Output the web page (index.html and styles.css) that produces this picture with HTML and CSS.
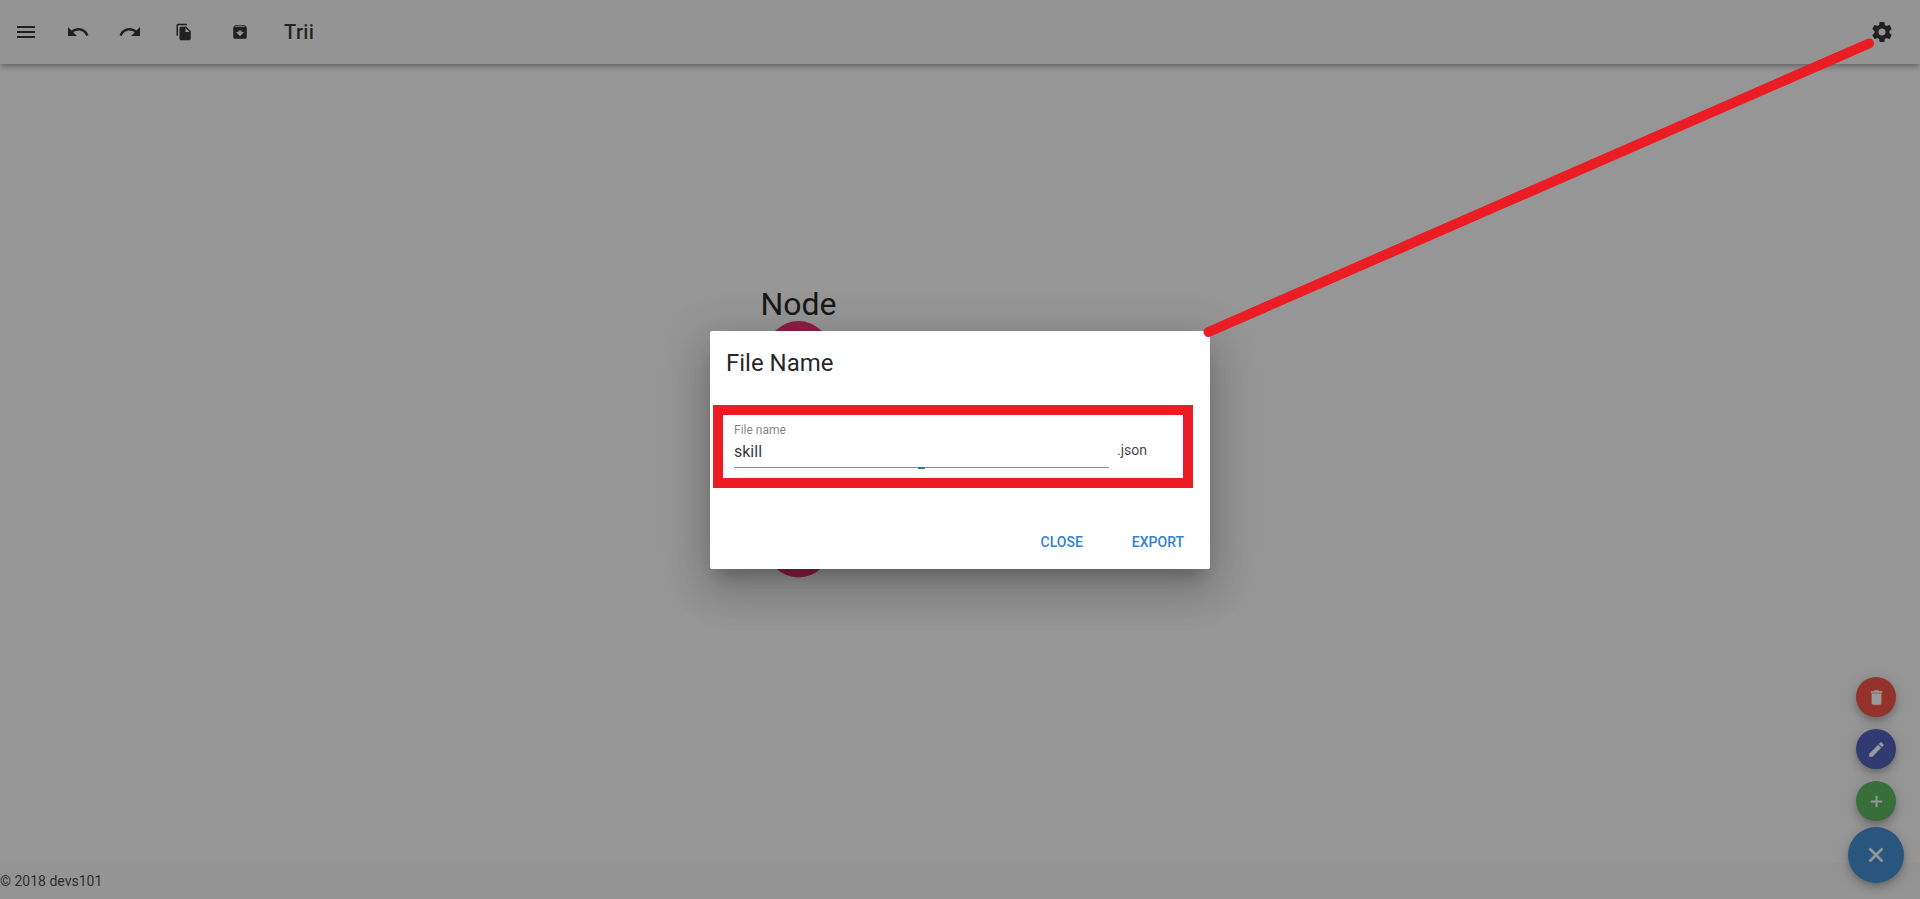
FILE: index.html
```
<!DOCTYPE html>
<html lang="en">
<head>
<meta charset="utf-8">
<title>Trii</title>
<link rel="stylesheet" href="styles.css">
</head>
<body>
<div class="app">
  <header class="toolbar">
    <svg class="icon menu" viewBox="0 0 24 24"><path d="M3 6h18v2H3V6m0 5h18v2H3v-2m0 5h18v2H3v-2z"/></svg>
    <svg class="icon undo" viewBox="0 0 24 24"><path d="M12.5 8c-2.65 0-5.05 1-6.9 2.6L2 7v9h9l-3.62-3.62C8.77 11.22 10.54 10.5 12.5 10.5c3.54 0 6.55 2.31 7.6 5.5l2.37-.78C21.08 11.03 17.15 8 12.5 8z"/></svg>
    <svg class="icon redo" viewBox="0 0 24 24"><path d="M18.4 10.6C16.55 9 14.15 8 11.5 8c-4.65 0-8.58 3.03-9.96 7.22L3.9 16c1.05-3.19 4.05-5.5 7.6-5.5 1.95 0 3.73.72 5.12 1.88L13 16h9V7l-3.6 3.6z"/></svg>
    <svg class="icon-small copy" viewBox="0 0 24 24"><path d="M16 1H4c-1.100 0-2 .9-2 2v14h2V3h12V1zm-1 4l6 6v10c0 1.100-.9 2-2 2H7.990C6.890 23 6 22.100 6 21l.01-14c0-1.100.89-2 1.990-2h7zm-1 7h5.500L14 6.500V12z"/></svg>
    <svg class="icon-small archive" viewBox="0 0 24 24"><path d="M20.540 5.230l-1.390-1.680C18.880 3.210 18.470 3 18 3H6c-.47 0-.88.21-1.160.55L3.460 5.230C3.170 5.570 3 6.020 3 6.500V19c0 1.100.9 2 2 2h14c1.100 0 2-.9 2-2V6.500c0-.48-.17-.93-.46-1.270zM12 17.500L6.500 12H10v-2h4v2h3.500L12 17.500zM5.120 5l.81-1h12l.94 1H5.120z"/></svg>
    <h1 class="brand">Trii</h1>
    <svg class="icon settings" viewBox="0 0 24 24"><path d="M12 15.500A3.500 3.500 0 0 1 8.500 12 3.500 3.500 0 0 1 12 8.500a3.500 3.500 0 0 1 3.500 3.500 3.500 3.500 0 0 1-3.500 3.500m7.430-2.530c.04-.32.070-.64.070-.97s-.03-.66-.07-1l2.110-1.630c.19-.15.240-.42.120-.64l-2-3.460c-.12-.22-.39-.31-.61-.22l-2.490 1c-.52-.39-1.060-.73-1.690-.98l-.37-2.650A.506.506 0 0 0 14 2h-4c-.25 0-.46.180-.5.420l-.37 2.650c-.63.250-1.170.59-1.690.98l-2.490-1c-.22-.09-.49 0-.61.220l-2 3.460c-.13.220-.07.490.12.640L4.570 11c-.04.340-.07.670-.07 1s.03.650.07.970l-2.110 1.660c-.19.150-.25.420-.12.640l2 3.460c.12.220.39.300.61.220l2.490-1.010c.52.400 1.060.740 1.690.990l.37 2.650c.04.240.25.420.5.420h4c.25 0 .46-.18.500-.42l.37-2.650c.63-.26 1.170-.59 1.690-.99l2.490 1.010c.22.080.49 0 .61-.22l2-3.460c.12-.22.070-.49-.12-.64l-2.110-1.660z"/></svg>
  </header>
  <main class="stage">
    <svg class="tree" viewBox="0 0 1920 799">
      <circle class="node" cx="798.500" cy="289" r="32"/>
      <circle class="node" cx="798.500" cy="481.500" r="32"/>
      <text class="node-label" x="798.500" y="251" text-anchor="middle">Node</text>
    </svg>
  </main>
  <footer class="footer">© 2018 devs101</footer>
  <div class="speed-dial">
    <div class="fab red"><svg viewBox="0 0 24 24"><path d="M6 19c0 1.100.9 2 2 2h8c1.100 0 2-.9 2-2V7H6v12zM19 4h-3.500l-1-1h-5l-1 1H5v2h14V4z"/></svg></div>
    <div class="fab indigo"><svg viewBox="0 0 24 24"><path d="M3 17.250V21h3.750L17.810 9.940l-3.750-3.750L3 17.250zM20.710 7.040a1 1 0 0 0 0-1.410l-2.340-2.340a1 1 0 0 0-1.410 0l-1.830 1.830 3.750 3.750 1.830-1.830z"/></svg></div>
    <div class="fab green"><svg viewBox="0 0 24 24"><path d="M19 13h-6v6h-2v-6H5v-2h6V5h2v6h6v2z"/></svg></div>
    <div class="fab large"><svg viewBox="0 0 24 24"><path d="M19 6.410L17.590 5 12 10.590 6.410 5 5 6.410 10.590 12 5 17.590 6.410 19 12 13.410 17.590 19 19 17.590 13.410 12z"/></svg></div>
  </div>
</div>
<div class="overlay">
  <section class="dialog">
    <h2 class="dialog-title">File Name</h2>
    <div class="highlight">
      <div class="field">
        <span class="label">File name</span>
        <span class="value">skill</span>
      </div>
      <span class="suffix">.json</span>
    </div>
    <div class="actions"><span class="close">CLOSE</span><span>EXPORT</span></div>
  </section>
</div>
<svg class="annotation" viewBox="0 0 1920 899"><path d="M1208.500 332L1869 43.500"/></svg>
</body>
</html>
```
FILE: styles.css
```
* { box-sizing: border-box; }
body { margin: 0; font-family: Roboto, sans-serif; color: rgba(0,0,0,.87); overflow: hidden; }
.app { height: 899px; background: #fafafa; display: flex; flex-direction: column; position: relative; isolation: isolate; }
.toolbar { height: 64px; flex: none; display: flex; align-items: center; padding: 0 26px 0 14px; background: #f5f5f5; position: relative; z-index: 1;
  box-shadow: 0 2px 4px -1px rgba(0,0,0,.2), 0 4px 5px rgba(0,0,0,.14), 0 1px 10px rgba(0,0,0,.12); }
.toolbar svg { fill: rgba(0,0,0,.87); flex: none; }
.icon { width: 24px; height: 24px; }
.icon-small { width: 18px; height: 18px; }
.undo, .redo { margin-left: 28px; }
.copy { margin-left: 33px; }
.archive { margin-left: 38px; }
.brand { margin: 0 auto 0 35px; font-size: 20px; font-weight: 500; line-height: 30px; letter-spacing: .4px; }
.stage { flex: 1; min-height: 0; }
.tree { display: block; width: 1920px; height: 799px; }
.node { fill: #e91e63; }
.node-label { font-size: 32px; fill: #111; }
.footer { height: 36px; flex: none; background: #f5f5f5; font-size: 14px; line-height: 36px; color: rgba(0,0,0,.8); }
.speed-dial { position: absolute; right: 16px; bottom: 16px; width: 56px; display: flex; flex-direction: column; align-items: center; }
.fab { width: 40px; height: 40px; margin-bottom: 12px; border-radius: 50%; display: flex; align-items: center; justify-content: center;
  box-shadow: 0 3px 5px -1px rgba(0,0,0,.2), 0 6px 10px rgba(0,0,0,.14), 0 1px 18px rgba(0,0,0,.12); }
.fab svg { width: 19px; height: 19px; fill: #fff; stroke: #fff; stroke-width: .4; }
.red { background: #f44336; }
.indigo { background: #3f51b5; }
.green { background: #4caf50; margin-bottom: 6px; }
.large { width: 56px; height: 56px; margin: 0; background: #3182ce; }
.fab.large svg { width: 24px; height: 24px; stroke-width: .8; }
.overlay { position: absolute; inset: 0; background: rgba(33,33,33,.46); display: flex; align-items: center; justify-content: center; }
.dialog { width: 500px; height: 238px; margin-top: 1px; background: #fff; border-radius: 2px; display: flex; flex-direction: column;
  box-shadow: 0 11px 15px -7px rgba(0,0,0,.2), 0 24px 38px 3px rgba(0,0,0,.14), 0 9px 46px 8px rgba(0,0,0,.12); }
.dialog-title { margin: 16px 16px 26px; font-size: 24px; line-height: 32px; font-weight: 400; }
.highlight { width: 480px; height: 83px; margin-left: 3px; border: 10px solid #ec1c24; padding-left: 11px; display: flex; }
.field { width: 375px; height: 53px; display: flex; flex-direction: column; border-bottom: 1px solid #8a8a9c; position: relative; }
.field::after { content: ""; position: absolute; left: 184px; bottom: -2px; width: 7px; height: 2px; background: #2b7a8c; }
.label { margin-top: 7px; font-size: 12px; line-height: 16px; color: rgba(0,0,0,.5); }
.value { margin-top: 4px; font-size: 16px; line-height: 20px; color: rgba(0,0,0,.8); }
.suffix { margin: 25px 0 0 8px; font-size: 14px; line-height: 20px; color: rgba(0,0,0,.76); }
.actions { display: flex; justify-content: flex-end; margin-top: 44px; padding-right: 26px; font-size: 14px; font-weight: 500; line-height: 20px; color: #3182ce; }
.close { margin-right: 49px; }
.annotation { position: absolute; left: 0; top: 0; width: 1920px; height: 899px; }
.annotation path { stroke: #ec1c24; stroke-width: 10; stroke-linecap: round; }
```
